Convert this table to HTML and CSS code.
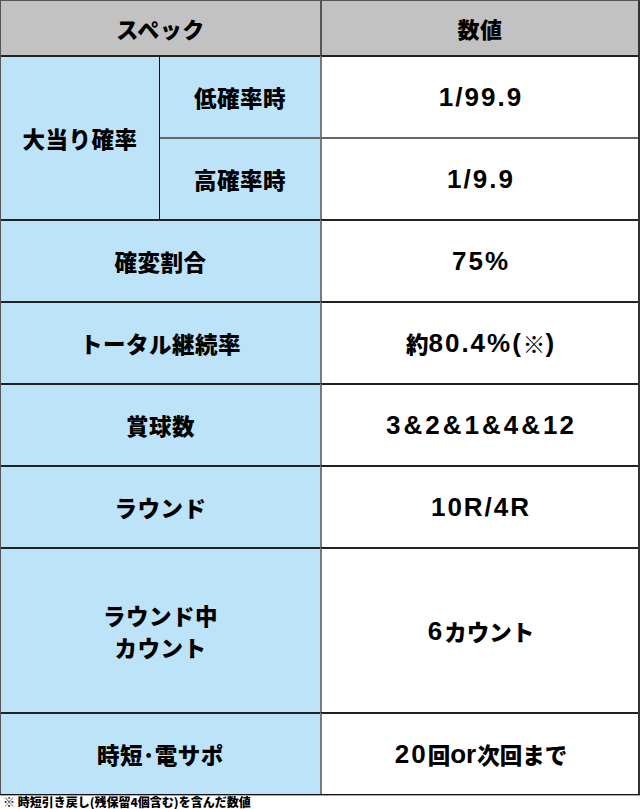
FILE: index.html
```html
<!DOCTYPE html>
<html lang="ja">
<head>
<meta charset="utf-8">
<link rel="stylesheet" href="styles.css">
</head>
<body>
<div class="spec">
  <div class="cell head span2">スペック</div>
  <div class="cell head val">数値</div>

  <div class="cell key rs2 c1">大当り確率</div>
  <div class="cell key sub">低確率時</div>
  <div class="cell val num">1/99.9</div>
  <div class="cell key sub subtop">高確率時</div>
  <div class="cell val num subtop">1/9.9</div>

  <div class="cell key span2">確変割合</div>
  <div class="cell val num">75%</div>

  <div class="cell key span2">トータル継続率</div>
  <div class="cell val num"><span class="ja">約</span>80.4%(<span class="ja">※</span>)</div>

  <div class="cell key span2">賞球数</div>
  <div class="cell val num">3<span class="amp">&amp;</span>2<span class="amp">&amp;</span>1<span class="amp">&amp;</span>4<span class="amp">&amp;</span>12</div>

  <div class="cell key span2">ラウンド</div>
  <div class="cell val num">10R/4R</div>

  <div class="cell key span2 tall">ラウンド中<br>カウント</div>
  <div class="cell val num tall">6<span class="ja">カウント</span></div>

  <div class="cell key span2 last">時短･電サポ</div>
  <div class="cell val num last">20<span class="ja">回</span><span class="tight">or</span><span class="ja">次回まで</span></div>
</div>
<p class="note">※ 時短引き戻し(残保留4個含む)を含んだ数値</p>
</body>
</html>
```

FILE: styles.css
```css
html, body {
  margin: 0;
  padding: 0;
  background: #ffffff;
}
body {
  width: 640px;
  font-family: "Noto Sans CJK JP", "Noto Sans", sans-serif;
  font-weight: 900;
  color: #000;
}
.spec {
  display: grid;
  grid-template-columns: 159px 160px 318px;
  grid-template-rows: 54px 82px 82px 82px 82px 82px 82px 165px 82px;
  border-top: 1px solid #555;
  border-left: 1px solid #555;
  border-right: 2px solid #333;
  border-bottom: 2px solid #111;
  box-sizing: border-box;
  width: 640px;
  height: 795px;
  box-shadow: 0 1px 0 #aaa;
}
.cell {
  display: flex;
  align-items: center;
  justify-content: center;
  text-align: center;
  font-size: 22.5px;
  line-height: 32px;
  box-sizing: border-box;
  border-top: 2px solid #222;
  letter-spacing: 0.5px;
}
.head {
  background: #c2c2c2;
  border-top: none;
  font-size: 22px;
}
.span2 { grid-column: 1 / 3; }
.rs2 { grid-row: 2 / 4; }
.c1 { border-right: 1px solid #111; }
.key { background: #bce3f8; }
.val {
  background: #fff;
  border-left: 2px solid #7a7a7a;
}
.head.val { background: #c2c2c2; border-left: 2px solid #555; }
.subtop { border-top: 2px solid #666; }
.num {
  font-family: "Liberation Sans", "Noto Sans CJK JP", sans-serif;
  font-weight: 700;
  font-size: 26px;
  letter-spacing: 2px;
  padding-left: 2px;
}
.num .ja {
  font-family: "Noto Sans CJK JP", sans-serif;
  font-weight: 900;
  font-size: 22.5px;
  letter-spacing: 0;
}
.num .tight { letter-spacing: 0; margin-right: 1px; }
.num .amp { margin: 0 1px; }
.note {
  margin: 0;
  padding: 0 0 0 3px;
  font-size: 12px;
  line-height: 13px;
  height: 14px;
  font-family: "Noto Sans CJK JP", sans-serif;
  font-weight: 900;
}
```
